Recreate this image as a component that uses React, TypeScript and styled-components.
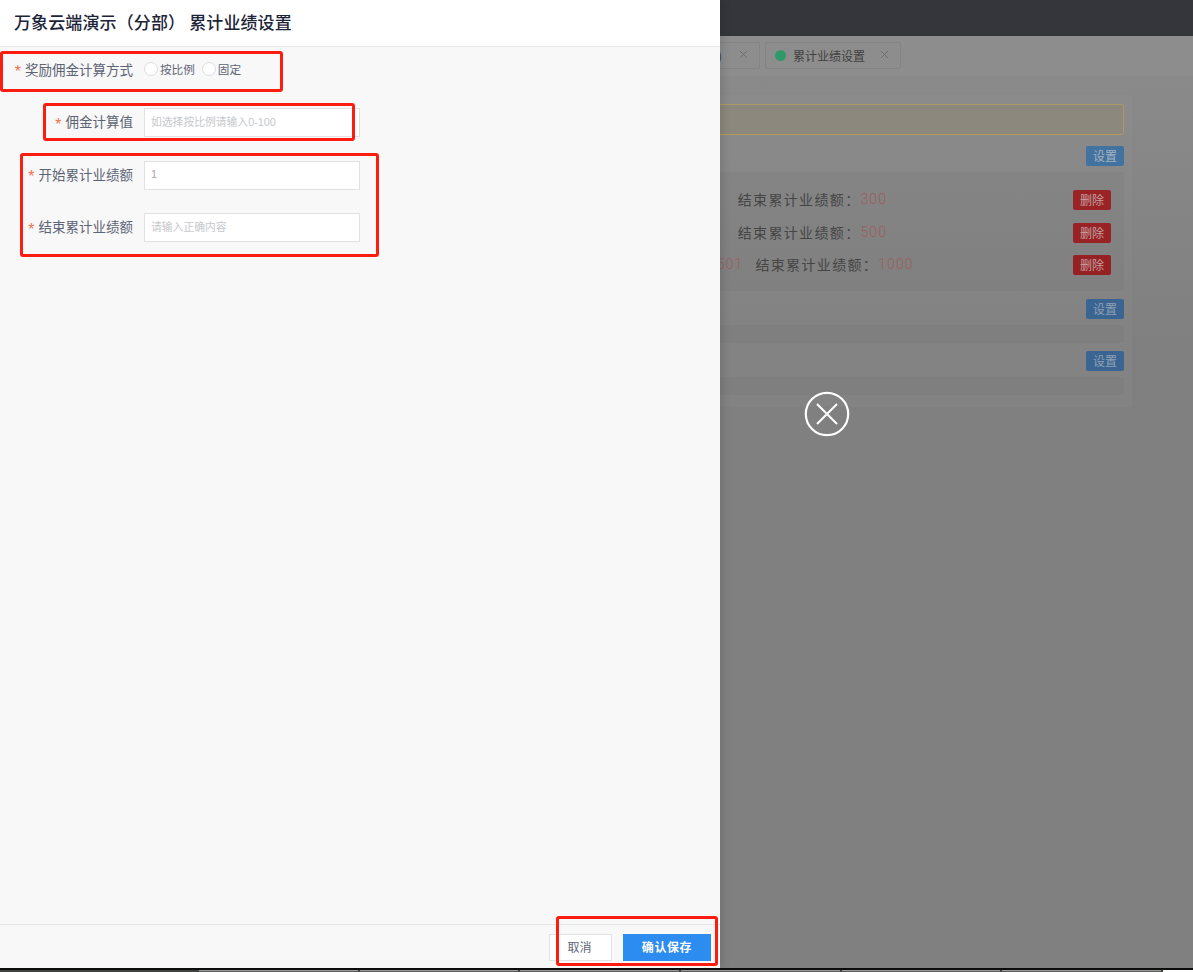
import React from "react";
import styled, { createGlobalStyle } from "styled-components";

const GlobalStyle = createGlobalStyle`
  html, body { margin: 0; padding: 0; background: #808080; }
  * { box-sizing: border-box; }
  body { font-family: "Noto Sans CJK SC", "Noto Sans", "Liberation Sans", sans-serif; overflow: hidden; }
`;

const Screen = styled.div`
  width: 1193px;
  height: 972px;
  display: flex;
  flex-direction: column;
  overflow: hidden;
`;

const Stage = styled.div`
  position: relative;
  height: 968px;
  overflow: hidden;
  flex: none;
`;

/* dimmed application behind the drawer */
const Page = styled.div`
  height: 100%;
  display: flex;
  flex-direction: column;
  background: linear-gradient(#8a8a8a 76px, #808080 340px);
`;

const TopBar = styled.div`
  height: 36px;
  flex: none;
  background: #35363b;
`;

const TabStrip = styled.div`
  height: 40px;
  flex: none;
  display: flex;
  align-items: flex-start;
  gap: 5px;
  padding: 6px 0 0 200px;
  background: #8d8d8d;
`;

const Tab = styled.div<{ $width: number }>`
  width: ${(p) => p.$width}px;
  flex: none;
  height: 27px;
  display: flex;
  align-items: center;
  gap: 7px;
  padding: 0 11px 1px 9px;
  border: 1px solid #848484;
  border-radius: 2px;
  font-size: 12px;
  color: #404040;
`;

const TabDot = styled.span`
  width: 11px;
  height: 11px;
  flex: none;
  border-radius: 50%;
  background: #2f9a68;
`;

const TabLabel = styled.span<{ $end?: boolean }>`
  flex: 1;
  padding-right: ${(p) => (p.$end ? "10px" : "0")};
  text-align: ${(p) => (p.$end ? "right" : "left")};
  white-space: nowrap;
`;

const TabCross = styled.svg`
  width: 9px;
  height: 9px;
  flex: none;
  margin-bottom: 2px;
  stroke: #6e6e6e;
  stroke-width: 1;
`;

const Content = styled.div`
  padding: 18px 60px 0 220px;
`;

const Card = styled.div`
  height: 314px;
  padding: 9px 8px 0;
  background: rgba(255, 255, 255, 0.025);
  border: 1px solid rgba(0, 0, 0, 0.02);
`;

const Notice = styled.div`
  height: 31px;
  margin-bottom: 11px;
  border: 1px solid #b09a60;
  border-radius: 3px;
  background: #8d887d;
`;

const SectionHead = styled.div`
  display: flex;
  justify-content: flex-end;
  margin-bottom: 6px;
`;

const SmallButton = styled.div<{ $bg: string; $fg: string }>`
  width: 38px;
  height: 20px;
  display: flex;
  align-items: center;
  justify-content: center;
  border-radius: 2px;
  font-size: 12px;
  letter-spacing: 0;
  line-height: 20px;
  color: ${(p) => p.$fg};
  background: ${(p) => p.$bg};
`;

const Panel = styled.div<{ $h: number; $mb: number }>`
  height: ${(p) => p.$h}px;
  margin-bottom: ${(p) => p.$mb}px;
  padding: 18px 13px 0 361px;
  display: flex;
  flex-direction: column;
  gap: 12.5px;
  background: rgba(0, 0, 0, 0.025);
`;

const TierRow = styled.div`
  height: 20px;
  display: flex;
  align-items: flex-start;
  font-size: 14px;
  line-height: 18px;
  letter-spacing: 1.35px;
  color: #454545;
  white-space: nowrap;
`;

const TierValue = styled.span<{ $shift?: boolean }>`
  color: #9c5c5c;
  margin-left: ${(p) => (p.$shift ? "4px" : "0")};
  margin-right: ${(p) => (p.$shift ? "12px" : "16px")};
  letter-spacing: 1.1px;
  font-weight: 300;
  font-family: "Roboto", "Liberation Sans", sans-serif;
`;

const DeleteButton = styled(SmallButton)`
  margin-left: auto;
`;

/* drawer */
const Drawer = styled.div`
  position: absolute;
  left: 0;
  top: 0;
  bottom: 0;
  width: 720px;
  display: flex;
  flex-direction: column;
  background: #f8f8f8;
  box-shadow: 3px 0 8px rgba(0, 0, 0, 0.12);
`;

const DrawerHead = styled.header`
  height: 47px;
  flex: none;
  display: flex;
  align-items: center;
  padding: 0 14px 4px;
  background: #fff;
  border-bottom: 1px solid #e8e8e8;
  font-size: 17px;
  font-weight: 500;
  letter-spacing: 0.12px;
  color: #1c2438;
  white-space: pre;
`;

const DrawerBody = styled.div`
  flex: 1;
  display: flex;
  flex-direction: column;
  gap: 23.5px;
  padding-top: 8.5px;
`;

const Field = styled.div`
  height: 29px;
  display: flex;
  align-items: center;
  gap: 11px;
`;

const FieldLabel = styled.label`
  width: 133px;
  flex: none;
  display: flex;
  justify-content: flex-end;
  align-items: center;
  gap: 4px;
  margin-bottom: 3px;
  font-size: 13.5px;
  color: #5d6475;
  white-space: nowrap;
`;

const Star = styled.span`
  padding-top: 7px;
  font-family: "Liberation Sans", sans-serif;
  font-size: 16px;
  line-height: 14px;
  color: #f2704e;
`;

const TextInput = styled.input`
  width: 216px;
  height: 29px;
  padding: 0 6px 2px;
  border: 1px solid #e0e1e3;
  background: #fff;
  border-radius: 0;
  outline: none;
  font-family: "Liberation Sans", "Noto Sans CJK SC", sans-serif;
  font-size: 10.8px;
  color: #a4a6aa;
  &::placeholder {
    color: #c6c8cc;
    opacity: 1;
  }
`;

const RadioGroup = styled.div`
  display: flex;
  align-items: center;
  margin-bottom: 3px;
  font-size: 11.6px;
  color: #5d6475;
`;

const RadioOption = styled.span`
  display: flex;
  align-items: center;
  gap: 2px;
  margin-right: 7px;
  white-space: nowrap;
`;

const RadioDot = styled.span`
  width: 14px;
  height: 14px;
  border: 1px solid #dcdee2;
  border-radius: 50%;
  background: #fff;
`;

const DrawerFoot = styled.footer`
  height: 44px;
  flex: none;
  display: flex;
  justify-content: flex-end;
  align-items: flex-start;
  gap: 11px;
  padding: 9px 9px 0 0;
  border-top: 1px solid #e6e6e6;
`;

const CancelButton = styled.button`
  width: 63px;
  height: 27px;
  padding: 0 2px 2px 0;
  border: 1px solid #e2e3e5;
  background: #fff;
  font-family: inherit;
  font-size: 12px;
  color: #5d6475;
`;

const SaveButton = styled.button`
  width: 88px;
  height: 27px;
  padding: 0 0 2px;
  border: 0;
  background: #2d8cf0;
  font-family: inherit;
  font-size: 12px;
  font-weight: 700;
  letter-spacing: 0.6px;
  color: #fff;
`;

const CloseCircle = styled.svg`
  position: absolute;
  left: 804px;
  top: 391px;
  width: 46px;
  height: 46px;
`;

const Mark = styled.div<{ $x: number; $y: number; $w: number; $h: number }>`
  position: absolute;
  left: ${(p) => p.$x}px;
  top: ${(p) => p.$y}px;
  width: ${(p) => p.$w}px;
  height: ${(p) => p.$h}px;
  border: 3px solid #fd1c10;
  border-radius: 3px;
  pointer-events: none;
`;

const TaskStrip = styled.div`
  height: 4px;
  flex: none;
  display: flex;
  gap: 2px;
  padding-left: 199px;
  background: #3e4340;
  border-top: 2px solid #0c0c0c;
`;

const TaskItem = styled.div<{ $active?: boolean }>`
  width: 158.7px;
  flex: none;
  background: ${(p) => (p.$active ? "#ffffff" : "#5c5f5c")};
  border-top: 1px solid ${(p) => (p.$active ? "#ffffff" : "#9a9a9a")};
`;

const Cross = () => (
  <TabCross viewBox="0 0 9 9">
    <path d="M1 1 L8 8 M8 1 L1 8" fill="none" />
  </TabCross>
);

const DELETE_FG = "#c2a2a2";

export default function App() {
  return (
    <>
      <GlobalStyle />
      <Screen>
        <Stage>
          <Page>
            <TopBar />
            <TabStrip>
              <Tab $width={560}>
                <TabLabel $end>累计业绩设置(0)</TabLabel>
                <Cross />
              </Tab>
              <Tab $width={136}>
                <TabDot />
                <TabLabel>累计业绩设置</TabLabel>
                <Cross />
              </Tab>
            </TabStrip>
            <Content>
              <Card>
                <Notice />
                <SectionHead>
                  <SmallButton $bg="#42729f" $fg="#a6b2c0">设置</SmallButton>
                </SectionHead>
                <Panel $h={119} $mb={8}>
                  <TierRow>
                    开始累计业绩额：<TierValue>1</TierValue>结束累计业绩额：<TierValue>300</TierValue>
                    <DeleteButton $bg="#9a2325" $fg={DELETE_FG}>删除</DeleteButton>
                  </TierRow>
                  <TierRow>
                    开始累计业绩额：<TierValue>1</TierValue>结束累计业绩额：<TierValue>500</TierValue>
                    <DeleteButton $bg="#982224" $fg={DELETE_FG}>删除</DeleteButton>
                  </TierRow>
                  <TierRow>
                    开始累计业绩额：<TierValue $shift>501</TierValue>结束累计业绩额：<TierValue>1000</TierValue>
                    <DeleteButton $bg="#962123" $fg={DELETE_FG}>删除</DeleteButton>
                  </TierRow>
                </Panel>
                <SectionHead>
                  <SmallButton $bg="#3a6593" $fg="#91a0b0">设置</SmallButton>
                </SectionHead>
                <Panel $h={18} $mb={8} />
                <SectionHead>
                  <SmallButton $bg="#3a6593" $fg="#91a0b0">设置</SmallButton>
                </SectionHead>
                <Panel $h={18} $mb={0} />
              </Card>
            </Content>
          </Page>

          <Drawer>
            <DrawerHead>万象云端演示（分部） 累计业绩设置</DrawerHead>
            <DrawerBody>
              <Field>
                <FieldLabel>
                  <Star>*</Star>奖励佣金计算方式
                </FieldLabel>
                <RadioGroup>
                  <RadioOption>
                    <RadioDot />按比例
                  </RadioOption>
                  <RadioOption>
                    <RadioDot />固定
                  </RadioOption>
                </RadioGroup>
              </Field>
              <Field>
                <FieldLabel>
                  <Star>*</Star>佣金计算值
                </FieldLabel>
                <TextInput placeholder="如选择按比例请输入0-100" readOnly />
              </Field>
              <Field>
                <FieldLabel>
                  <Star>*</Star>开始累计业绩额
                </FieldLabel>
                <TextInput value="1" readOnly />
              </Field>
              <Field>
                <FieldLabel>
                  <Star>*</Star>结束累计业绩额
                </FieldLabel>
                <TextInput placeholder="请输入正确内容" readOnly />
              </Field>
            </DrawerBody>
            <DrawerFoot>
              <CancelButton>取消</CancelButton>
              <SaveButton>确认保存</SaveButton>
            </DrawerFoot>
          </Drawer>

          <CloseCircle viewBox="0 0 46 46">
            <circle cx="23" cy="23" r="21.2" fill="none" stroke="#fff" strokeWidth="2.2" />
            <path d="M13 13 L33 33 M33 13 L13 33" fill="none" stroke="#fff" strokeWidth="2" />
          </CloseCircle>

          <Mark $x={0} $y={51} $w={283} $h={41} />
          <Mark $x={43} $y={103} $w={312} $h={38} />
          <Mark $x={20} $y={153} $w={359} $h={104} />
          <Mark $x={556} $y={916} $w={162} $h={50} />
        </Stage>
        <TaskStrip>
          <TaskItem />
          <TaskItem />
          <TaskItem />
          <TaskItem />
          <TaskItem />
          <TaskItem />
          <TaskItem $active />
        </TaskStrip>
      </Screen>
    </>
  );
}
